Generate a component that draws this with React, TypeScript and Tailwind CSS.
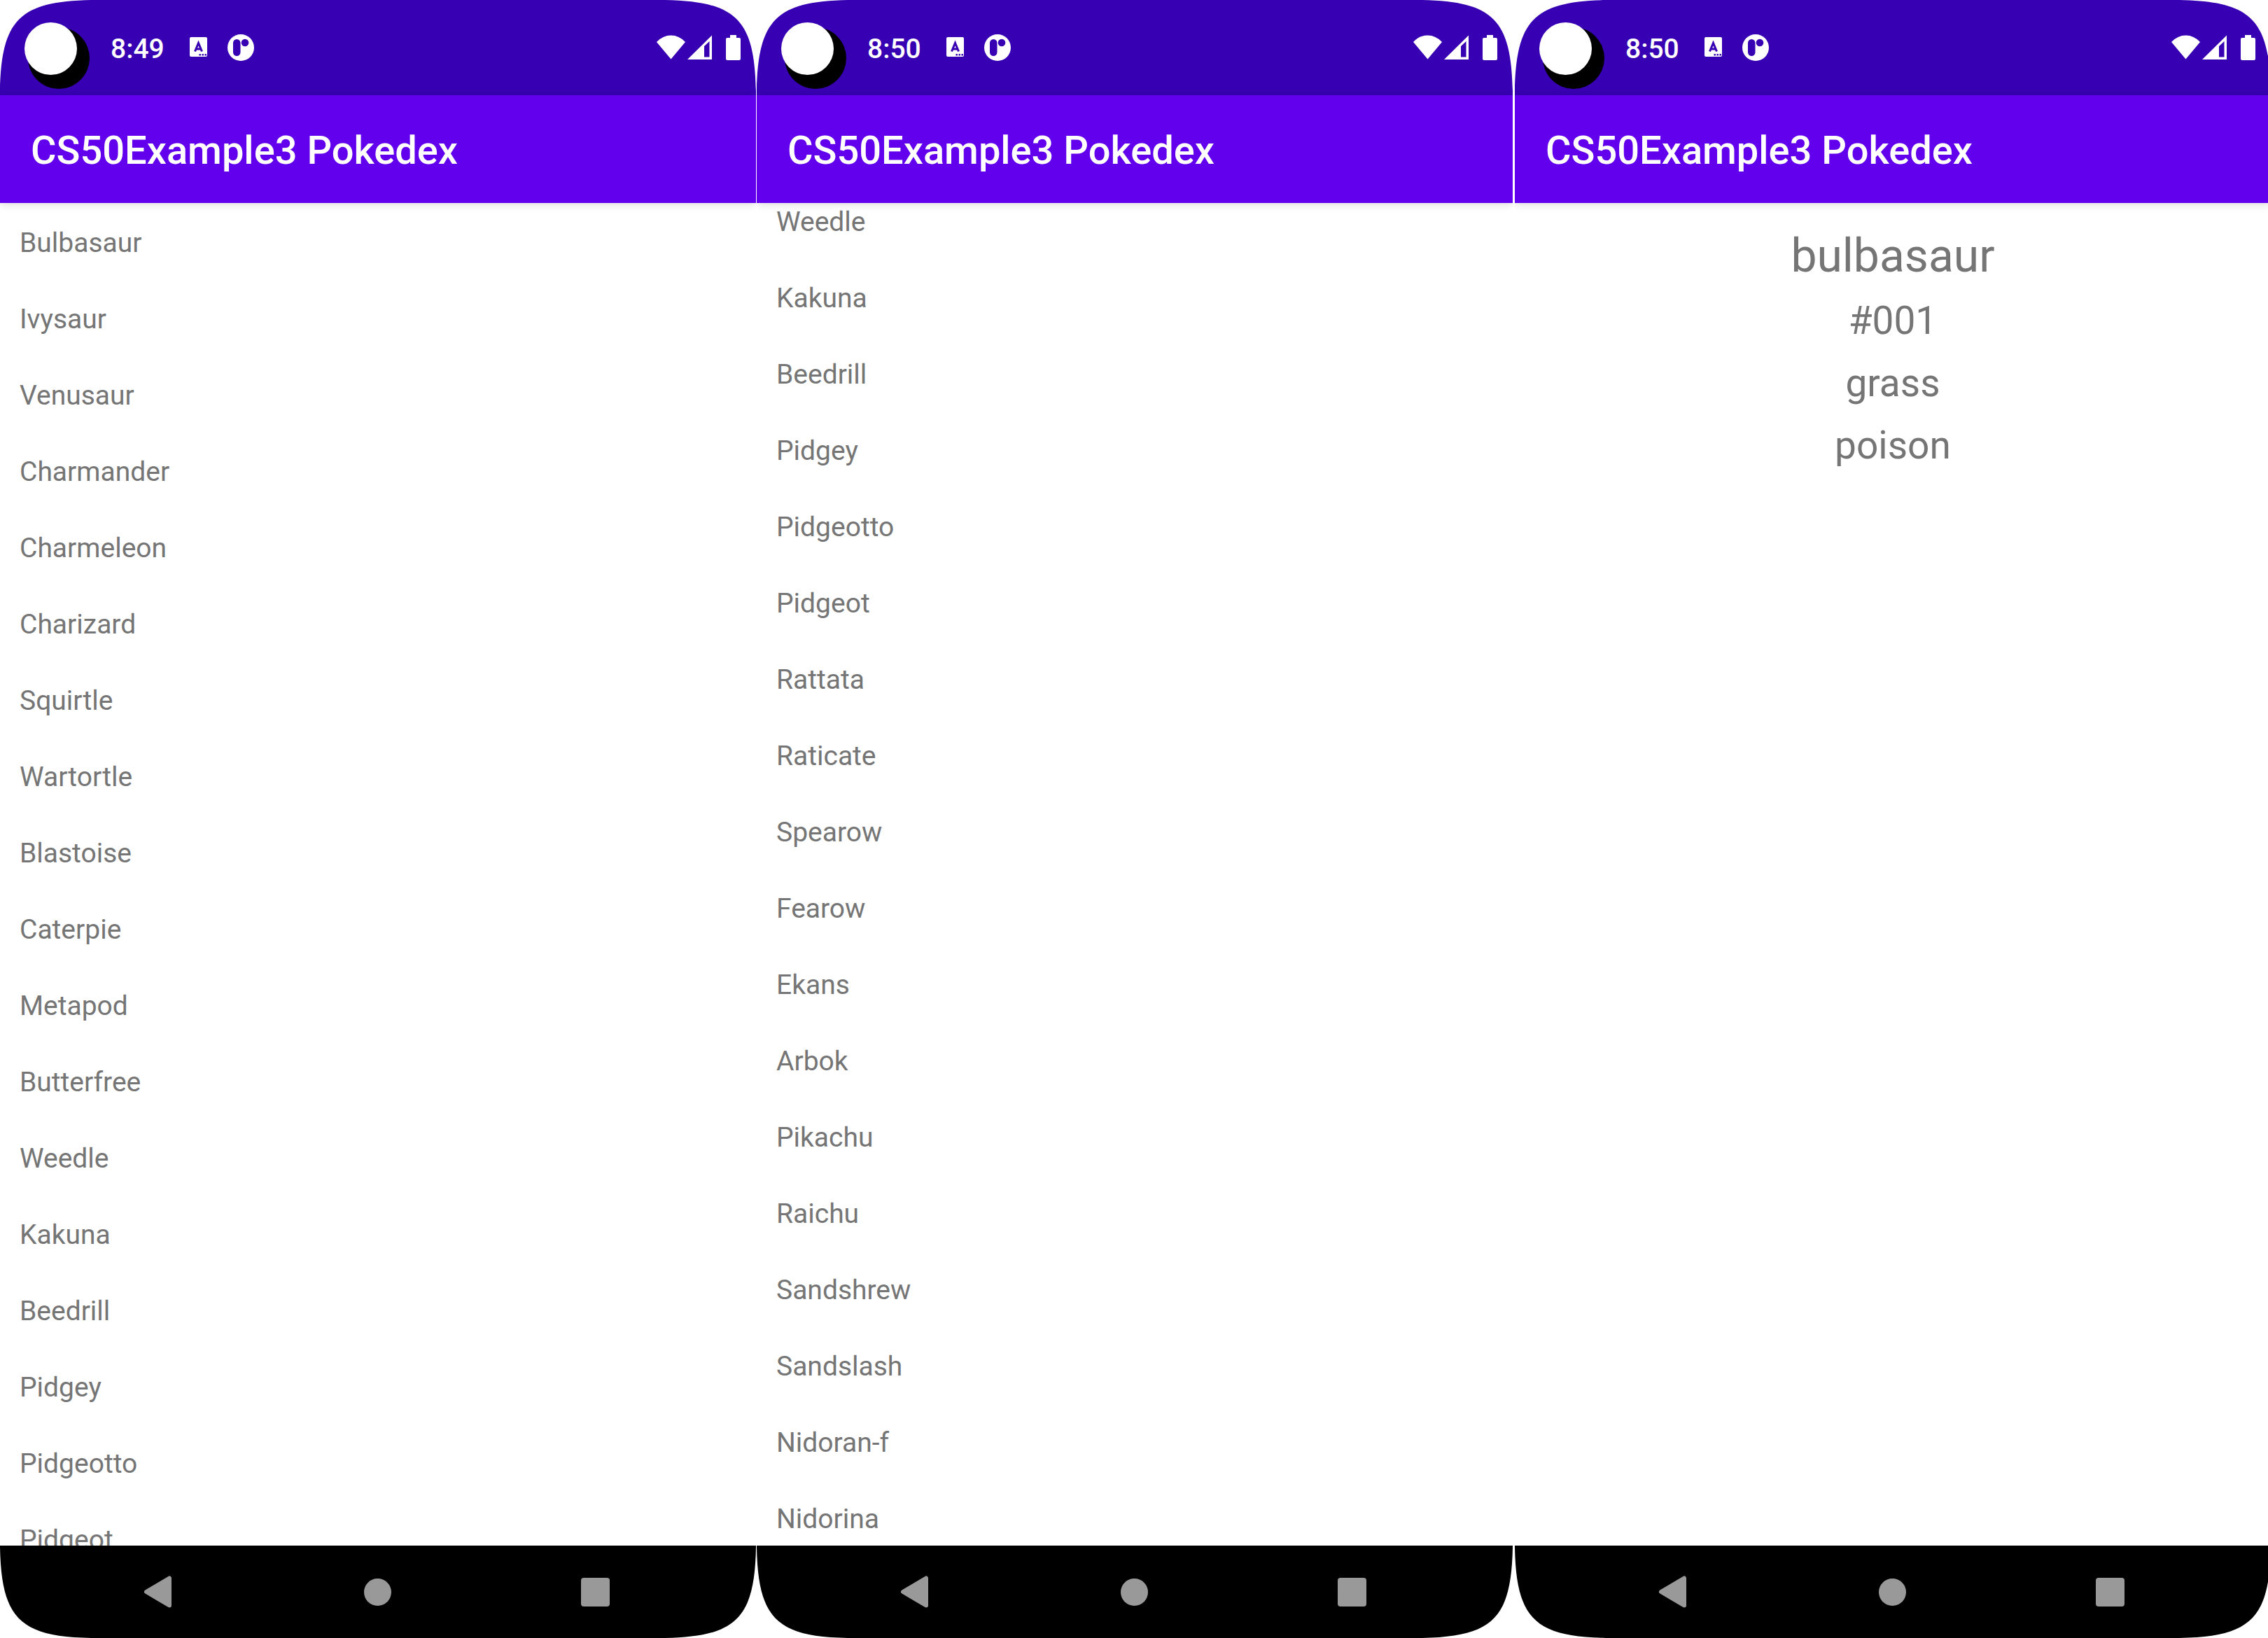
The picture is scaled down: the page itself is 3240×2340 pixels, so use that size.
import type { ReactNode } from "react";

const firstList = [
  "Bulbasaur", "Ivysaur", "Venusaur", "Charmander", "Charmeleon", "Charizard",
  "Squirtle", "Wartortle", "Blastoise", "Caterpie", "Metapod", "Butterfree",
  "Weedle", "Kakuna", "Beedrill", "Pidgey", "Pidgeotto", "Pidgeot",
];

const secondList = [
  "Weedle", "Kakuna", "Beedrill", "Pidgey", "Pidgeotto", "Pidgeot", "Rattata",
  "Raticate", "Spearow", "Fearow", "Ekans", "Arbok", "Pikachu", "Raichu",
  "Sandshrew", "Sandslash", "Nidoran-f", "Nidorina",
];

function Corner({ className }: { className: string }) {
  return (
    <svg viewBox="0 0 130 130" aria-hidden="true" className={`pointer-events-none absolute size-[130px] ${className}`}>
      <path d="M0 130 C2 28 28 2 130 0 H0 Z" fill="#fff" />
    </svg>
  );
}

function StatusBar({ time }: { time: string }) {
  return (
    <div className="flex h-[136px] shrink-0 items-center bg-[#3700b3] text-white">
      <svg viewBox="0 0 136 136" aria-hidden="true" className="size-[136px] shrink-0">
        <circle cx="84" cy="83" r="44" fill="#000" />
        <circle cx="72.5" cy="69.5" r="37.5" fill="#fff" />
      </svg>
      <div className="flex flex-1 items-center justify-between px-[22px]">
        <div className="flex items-center">
          <span className="w-[113px] pt-1 text-[39px] leading-[46px] font-medium">{time}</span>
          <svg viewBox="0 0 25 30" aria-hidden="true" className="h-[30px] w-[25px]">
            <rect width="25" height="28" rx="2" fill="#fff" />
            <path d="M7.500 20.500 L12.500 8.500 L17.500 20.500 M9.500 17 H15.500" fill="none" stroke="#3700b3" strokeWidth="3" />
            <path d="M13.500 24 h2.400 v2.400 h-2.400z M17.500 24 h2.400 v2.400 h-2.400z M21.500 24 h2.400 v2.400 h-2.400z" fill="#3700b3" />
          </svg>
          <svg viewBox="0 0 38 38" aria-hidden="true" className="ml-[29px] size-[38px]">
            <circle cx="19" cy="19" r="19" fill="#fff" />
            <rect x="8" y="7" width="10.5" height="24" rx="5.25" fill="#3700b3" />
            <circle cx="25" cy="12" r="5.3" fill="#3700b3" />
          </svg>
        </div>
        <svg viewBox="0 0 120 36" aria-hidden="true" className="h-[36px] w-[120px]" fill="#fff">
          <path d="M0 10 Q9 0.500 20.500 0.500 T41 10 L20.500 34.500 Z" />
          <path fillRule="evenodd" d="M44 35 L79 0.500 V35 Z M68 16 V31.500 H75.500 V9 Z" />
          <path d="M105 0 h9 v4 h4 a2 2 0 0 1 2 2 v28 a2 2 0 0 1 -2 2 h-17 a2 2 0 0 1 -2 -2 v-28 a2 2 0 0 1 2 -2 h4z" />
        </svg>
      </div>
    </div>
  );
}

function NavBar() {
  return (
    <nav className="flex h-[132px] shrink-0 items-center justify-between bg-black px-[196px]">
      <button aria-label="Back" className="flex size-[66px] items-center justify-center">
        <svg viewBox="0 0 66 66" aria-hidden="true" className="size-[66px]">
          <path d="M13 33 L46 13.500 V52.500 Z" fill="#999" stroke="#999" strokeWidth="6" strokeLinejoin="round" />
        </svg>
      </button>
      <button aria-label="Home" className="flex size-[66px] items-center justify-center">
        <span className="size-[39px] rounded-full bg-[#999]" />
      </button>
      <button aria-label="Recent apps" className="flex size-[66px] items-center justify-center">
        <span className="size-[41px] rounded-[4px] bg-[#999]" />
      </button>
    </nav>
  );
}

function Phone({ time, children }: { time: string; children: ReactNode }) {
  return (
    <section className="relative flex h-full w-1/3 shrink-0 flex-col overflow-hidden bg-white">
      <StatusBar time={time} />
      <header className="relative flex h-[154px] shrink-0 items-center bg-[#6200ee] px-[44px] pt-1 shadow-[0_2px_12px_rgba(0,0,0,0.14)]">
        <h1 className="text-[56px] leading-[66px] font-medium text-white">CS50Example3 Pokedex</h1>
      </header>
      <main className="min-h-0 flex-1 overflow-hidden text-[#757575]">{children}</main>
      <NavBar />
      <Corner className="top-0 left-0" />
      <Corner className="top-0 right-0 rotate-90" />
      <Corner className="right-0 bottom-0 rotate-180" />
      <Corner className="bottom-0 left-0 -rotate-90" />
    </section>
  );
}

function PokemonList({ names, className }: { names: string[]; className: string }) {
  return (
    <ul className={className}>
      {names.map((name) => (
        <li key={name} className="flex h-[109px] items-center px-[28px] text-[39px] leading-[46px]">
          {name}
        </li>
      ))}
    </ul>
  );
}

export default function App() {
  return (
    <div className="flex h-screen overflow-hidden bg-white font-['Roboto',sans-serif]">
      <Phone time="8:49">
        <PokemonList names={firstList} className="pt-[2px]" />
      </Phone>
      <div className="w-px shrink-0" />
      <Phone time="8:50">
        <PokemonList names={secondList} className="-mt-[28px]" />
      </Phone>
      <div className="w-[3px] shrink-0" />
      <Phone time="8:50">
        <div className="flex flex-col items-center pt-[28px]">
          <h2 className="text-[66px] leading-[96px]">bulbasaur</h2>
          <p className="text-[55px] leading-[89px]">#001</p>
          <p className="text-[55px] leading-[89px]">grass</p>
          <p className="text-[55px] leading-[89px]">poison</p>
        </div>
      </Phone>
    </div>
  );
}
